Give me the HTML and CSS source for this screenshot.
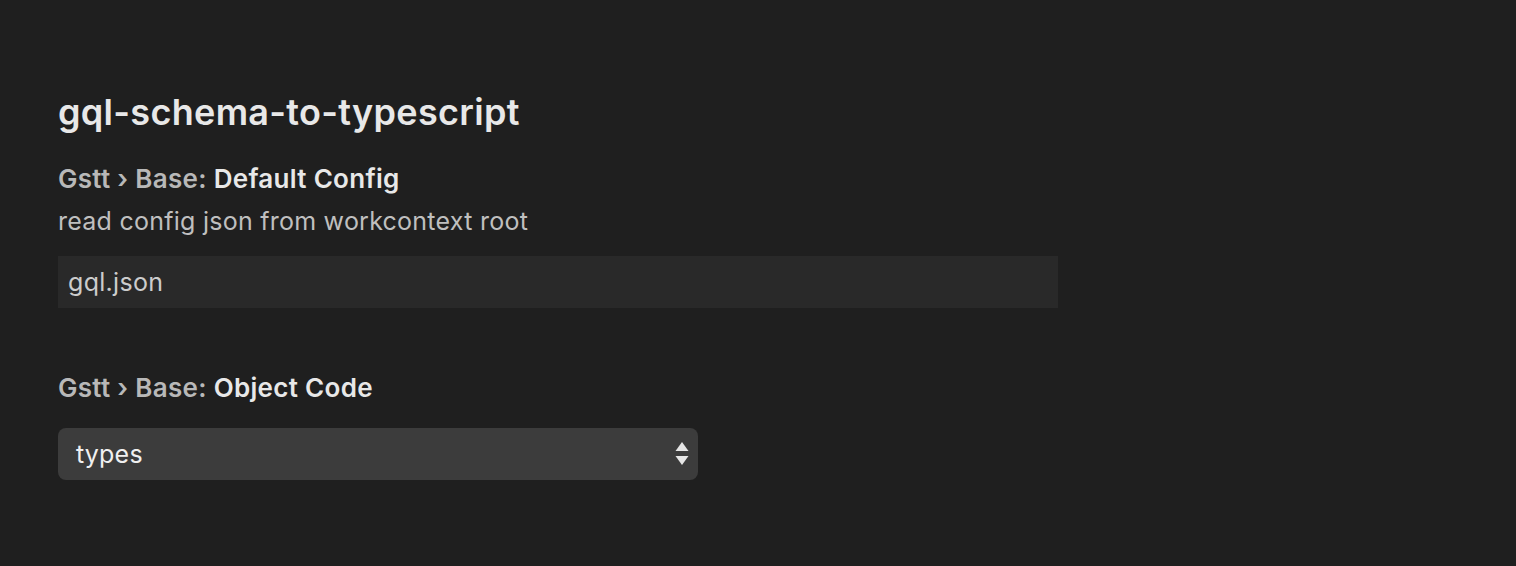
FILE: index.html
```html
<!DOCTYPE html>
<html>
<head>
<meta charset="utf-8">
<link rel="stylesheet" href="styles.css">
</head>
<body>
<div class="page">
  <h1 class="group-title">gql-schema-to-typescript</h1>
  <div class="setting">
    <div class="label"><span class="category">Gstt › Base: </span><span class="name">Default Config</span></div>
    <div class="desc">read config json from workcontext root</div>
    <div class="input">gql.json</div>
  </div>
  <div class="setting second">
    <div class="label"><span class="category">Gstt › Base: </span><span class="name">Object Code</span></div>
    <div class="select">
      <span class="select-value">types</span>
      <svg class="arrows" width="14" height="24" viewBox="0 0 14 24"><polygon points="7,0 13.5,9 0.5,9" fill="#e6e6e6"/><polygon points="0.5,14 13.5,14 7,23" fill="#e6e6e6"/></svg>
    </div>
  </div>
</div>
</body>
</html>
```
FILE: styles.css
```css
html, body {
  margin: 0;
  padding: 0;
  background: #1f1f1f;
  height: 100%;
}
.page {
  padding: 90px 0 0 58px;
  font-family: Inter, "Noto Sans", sans-serif;
  display: flex;
  flex-direction: column;
}
.group-title {
  margin: 0;
  font-size: 36px;
  line-height: 44px;
  font-weight: 600;
  color: #e8e8e8;
  letter-spacing: 0.3px;
}
.setting {
  margin-top: 27px;
  display: flex;
  flex-direction: column;
}
.setting.second {
  margin-top: 62px;
}
.label {
  font-size: 26px;
  line-height: 36px;
  font-weight: 600;
  letter-spacing: 0.3px;
}
.category {
  color: #b8b8b8;
}
.name {
  color: #e8e8e8;
}
.desc {
  margin-top: 6px;
  font-size: 25px;
  line-height: 36px;
  color: #bfbfbf;
  letter-spacing: 0.25px;
}
.input {
  margin-top: 17px;
  width: 1000px;
  height: 52px;
  box-sizing: border-box;
  background: #292929;
  padding-left: 10px;
  display: flex;
  align-items: center;
  font-size: 25px;
  color: #cccccc;
  letter-spacing: 0.3px;
}
.select {
  margin-top: 22px;
  width: 640px;
  height: 52px;
  box-sizing: border-box;
  background: #3c3c3c;
  border-radius: 8px;
  padding: 0 9px 0 18px;
  display: flex;
  align-items: center;
  justify-content: space-between;
  font-size: 25px;
  color: #f0f0f0;
  letter-spacing: 0.2px;
}
.arrows {
  display: block;
}
```
